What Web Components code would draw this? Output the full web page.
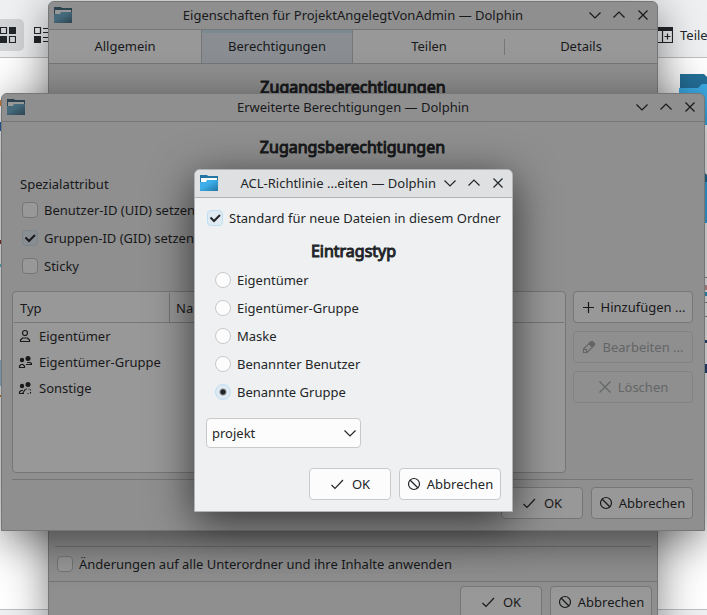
<!DOCTYPE html>
<html lang="de">
<head>
<meta charset="utf-8">
<title>Dolphin</title>
<style>
    html, body {
        margin: 0;
        height: 100%;
        overflow: hidden;
    }

    body {
        font: 13px/20px "Noto Sans", sans-serif;
        color: #232629;
        background: #fff;
    }

    .desk {
        position: relative;
        height: 100%;
    }

    file-manager {
        height: 100%;
    }

    .win {
        position: absolute;
    }

    #properties {
        left: 48px;
        right: 49px;
        top: 1px;
        bottom: -16px;
    }

    #advanced {
        left: 1px;
        right: 2px;
        top: 93px;
    }

    #acl {
        left: 194px;
        right: 194px;
        top: 169px;
    }

    .filler {
        flex: 1;
    }

    .pad {
        display: flex;
        flex-direction: column;
        padding: 10px 11px 11px 10px;
    }

    .attributes {
        display: flex;
        flex-direction: column;
        gap: 4px;
        padding: 12px 8px 13px;
    }

    .attributes b {
        font-weight: 400;
    }

    .indent {
        margin-left: 2px;
    }

    .columns {
        display: flex;
        gap: 7px;
    }

    entry-table {
        flex: 1;
    }

    .side {
        display: flex;
        flex-direction: column;
        gap: 8px;
        width: 120px;
    }

    .buttons {
        display: flex;
        justify-content: flex-end;
        gap: 8px;
    }

    .ok {
        width: 82px;
    }

    .cancel {
        width: 102px;
    }

    .rule {
        border-top: 1px solid var(--border);
    }

    #advanced .rule {
        margin: 6px 0 7px;
    }

    #properties .pad {
        padding: 8px 10px;
    }

    #properties .options {
        margin: 0 6px;
        padding: 5px 2px;
    }

    #properties .footer {
        border-top: 1px solid var(--border);
        padding: 4px 5px 12px;
    }

    #acl .pad {
        padding: 8px 11px 11px;
    }

    #acl check-box {
        padding-left: 1px;
    }

    #acl section-title {
        margin: 6px 0 2px;
    }

    #acl combo-box {
        margin: 14px 0 20px;
    }
</style>
</head>
<body>
<div class="desk">
    <file-manager></file-manager>

    <dialog-window id="properties" class="win" inactive heading="Eigenschaften für ProjektAngelegtVonAdmin — Dolphin">
        <tab-strip labels="Allgemein,Berechtigungen,Teilen,Details" active="1"></tab-strip>
        <div class="pad"><section-title>Zugangsberechtigungen</section-title></div>
        <div class="filler"></div>
        <div class="options rule">
            <check-box>Änderungen auf alle Unterordner und ihre Inhalte anwenden</check-box>
        </div>
        <div class="buttons footer">
            <push-button class="ok" icon="ok">OK</push-button>
            <push-button class="cancel" icon="cancel">Abbrechen</push-button>
        </div>
    </dialog-window>

    <dialog-window id="advanced" class="win" inactive heading="Erweiterte Berechtigungen — Dolphin">
        <div class="pad">
            <section-title>Zugangsberechtigungen</section-title>
            <div class="attributes">
                <b>Spezialattribut</b>
                <check-box class="indent">Benutzer-ID (UID) setzen</check-box>
                <check-box class="indent" checked>Gruppen-ID (GID) setzen</check-box>
                <check-box class="indent">Sticky</check-box>
            </div>
            <div class="columns">
                <entry-table></entry-table>
                <div class="side">
                    <push-button icon="add">Hinzufügen ...</push-button>
                    <push-button icon="edit" disabled>Bearbeiten ...</push-button>
                    <push-button icon="remove" disabled>Löschen</push-button>
                </div>
            </div>
            <div class="rule"></div>
            <div class="buttons">
                <push-button class="ok" icon="ok">OK</push-button>
                <push-button class="cancel" icon="cancel">Abbrechen</push-button>
            </div>
        </div>
    </dialog-window>

    <dialog-window id="acl" class="win" heading="ACL-Richtlinie ...eiten — Dolphin">
        <div class="pad">
            <check-box checked>Standard für neue Dateien in diesem Ordner</check-box>
            <section-title>Eintragstyp</section-title>
            <radio-list options="Eigentümer,Eigentümer-Gruppe,Maske,Benannter Benutzer,Benannte Gruppe" selected="4"></radio-list>
            <combo-box label="Gruppe" options="projekt"></combo-box>
            <div class="buttons">
                <push-button class="ok" icon="ok">OK</push-button>
                <push-button class="cancel" icon="cancel">Abbrechen</push-button>
            </div>
        </div>
    </dialog-window>
</div>

<script>
const ICONS = {
    folder: `<svg width="20" height="18" viewBox="0 0 20 18">
        <defs><linearGradient id="body" x1="0" y1="0" x2="1" y2="1">
            <stop offset=".4" style="stop-color: var(--folder)"/>
            <stop offset="1" style="stop-color: var(--folder-dark)"/>
        </linearGradient></defs>
        <path style="fill: var(--folder-dark)" d="M1 1h7l1 1h10v8H1z"/>
        <path style="fill: var(--folder-paper)" d="M2 4h16v4H2z"/>
        <path fill="url(#body)" d="M1 8h6l1-2h11v11H1z"/></svg>`,
    down: '<svg width="12" height="12" viewBox="0 0 12 12"><path d="M.5 3.500l5.500 5.500 5.500-5.500"/></svg>',
    up: '<svg width="12" height="12" viewBox="0 0 12 12"><path d="M.5 8.500L6 3l5.500 5.500"/></svg>',
    close: '<svg width="12" height="12" viewBox="0 0 12 12"><path d="M1.500 1.500l9 9M10.500 1.500l-9 9"/></svg>',
    ok: '<svg width="14" height="14" viewBox="0 0 14 14"><path d="M1.500 8l3.500 3.500L13 3"/></svg>',
    cancel: '<svg width="14" height="14" viewBox="0 0 14 14"><circle cx="7" cy="7" r="5.500"/><path d="M3 3l8 8"/></svg>',
    add: '<svg width="14" height="14" viewBox="0 0 14 14"><path d="M7.500 2v11M2 7.500h11"/></svg>',
    edit: `<svg width="14" height="14" viewBox="0 0 14 14">
        <path d="M1.500 12.500V9L7 3.500 10.500 7 5 12.500zM2 9.500h2.500V12"/>
        <path fill="currentColor" d="M7 3.500L9 1.500h1.500L12.500 3.500V5l-2 2z"/></svg>`,
    remove: '<svg width="14" height="14" viewBox="0 0 14 14"><path d="M1.500 1.500l11 11M12.500 1.500l-11 11"/></svg>',
    user: `<svg width="14" height="14" viewBox="0 0 14 14">
        <circle cx="7" cy="4" r="2.500"/><path d="M2.500 12.500v-1.500l2-2h5l2 2v1.500z"/></svg>`,
    group: `<svg width="14" height="14" viewBox="0 0 14 14">
        <g fill="currentColor" stroke="none"><circle cx="4" cy="5" r="2.200"/><circle cx="10" cy="3.500" r="2.500"/></g>
        <path d="M1.500 12.500V11l1.500-1.500h2L6.500 11v1.500zM8 9.500h5.500V8.500L12 7.500H9"/></svg>`,
    others: `<svg width="14" height="14" viewBox="0 0 14 14">
        <g fill="currentColor" stroke="none"><circle cx="4" cy="5" r="2.200"/><circle cx="10" cy="3.500" r="2.500"/></g>
        <path d="M1.500 12.500V11l1.500-1.500h2M1 12.500h5M7.500 8l-3 4.500"/>
        <path stroke-dasharray="1 1.500" d="M8 8h4.500v5M9.500 12.500h3"/></svg>`
};

const SHARED = `
    :host { display: block; }
    svg { flex: none; display: block; fill: none; stroke: currentColor; stroke-width: 1.2; }
    button, input, select { font: inherit; color: inherit; margin: 0; box-sizing: border-box; }
`;

class BaseElement extends HTMLElement {
    connectedCallback() {
        this.attachShadow({ mode: 'open' });
        this.shadowRoot.innerHTML = `<style>${SHARED}${this.styles()}</style>${this.markup()}`;
    }

    list(name) {
        return (this.getAttribute(name) || '').split(',');
    }
}

class DialogWindow extends BaseElement {
    styles() {
        return `
            :host {
                --window: #eff0f1;
                --titlebar: #dee0e2;
                --view: #fcfcfc;
                --border: #c8c9cb;
                --check: #e0eaf2;
                --check-border: #bcdff5;
                --folder: #3daee9;
                --folder-dark: #2475a4;
                --folder-paper: #fcfcfc;
                display: flex;
                flex-direction: column;
                box-sizing: border-box;
                color: #232629;
                background: var(--window);
                border: 1px solid #b2b3b5;
                border-radius: 6px 6px 0 0;
                box-shadow: 0 10px 44px rgba(0, 0, 0, 0.65);
            }
            :host([inactive]) {
                --window: #8f8f8f;
                --titlebar: #8f8f8f;
                --view: #989898;
                --border: #757677;
                --check: #898e92;
                --check-border: #7b858c;
                --folder: #456a7c;
                --folder-dark: #2c4350;
                --folder-paper: #989898;
                --tab-active: #8a8e92;
                --accent: #7b8991;
                color: #18191b;
                border-color: #757677;
                box-shadow: 0 10px 44px rgba(0, 0, 0, 0.5);
            }
            header {
                display: flex;
                align-items: center;
                box-sizing: border-box;
                height: 28px;
                padding: 0 8px 2px 4px;
                background: var(--titlebar);
                border-bottom: 1px solid #b2b3b5;
                border-radius: 5px 5px 0 0;
            }
            :host([inactive]) header { border-color: var(--border); }
            header > svg { stroke: none; }
            h1 {
                flex: 1;
                margin: 0;
                font: inherit;
                text-align: center;
                white-space: nowrap;
            }
            /* room on the left balances the three window controls */
            :host([inactive]) h1 { padding-left: 44px; }
            :host(:not([inactive])) h1 { text-align: right; padding-right: 8px; }
            nav { display: flex; gap: 12px; }
            nav button {
                display: flex;
                padding: 0;
                border: 0;
                background: none;
            }
        `;
    }

    markup() {
        return `
            <header>
                ${ICONS.folder}
                <h1>${this.getAttribute('heading')}</h1>
                <nav>
                    <button aria-label="Minimieren">${ICONS.down}</button>
                    <button aria-label="Maximieren">${ICONS.up}</button>
                    <button aria-label="Schließen">${ICONS.close}</button>
                </nav>
            </header>
            <slot></slot>
        `;
    }
}

class TabStrip extends BaseElement {
    styles() {
        return `
            :host { display: flex; height: 33px; background: var(--view); border-bottom: 1px solid var(--border); }
            button {
                flex: 1;
                padding: 0 0 2px;
                border: 0;
                background: none;
            }
            button.active {
                background: var(--tab-active);
                box-shadow: inset 1px 0 var(--border), inset -1px 0 var(--border), inset 0 3px var(--accent);
            }
            i { width: 1px; margin: 9px 0 8px -1px; background: var(--border); }
        `;
    }

    markup() {
        const active = Number(this.getAttribute('active'));
        return this.list('labels').map((label, i) => {
            const divider = i > active + 1 ? '<i></i>' : '';
            return `${divider}<button role="tab" class="${i === active ? 'active' : ''}">${label}</button>`;
        }).join('');
    }
}

class SectionTitle extends BaseElement {
    styles() {
        return `
            h2 {
                margin: 0;
                font-size: 16px;
                line-height: 30px;
                font-weight: 400;
                text-align: center;
                -webkit-text-stroke: 1px currentColor;
            }
        `;
    }

    markup() {
        return '<h2><slot></slot></h2>';
    }
}

class CheckBox extends BaseElement {
    styles() {
        return `
            label { display: flex; align-items: center; gap: 6px; height: 24px; white-space: nowrap; }
            input {
                appearance: none;
                flex: none;
                width: 16px;
                height: 16px;
                background: var(--view);
                border: 1px solid var(--border);
                border-radius: 4px;
            }
            input:checked { background: var(--check); border-color: var(--check-border); }
            span { display: grid; align-items: center; }
            span > * { grid-area: 1 / 1; }
            svg { display: none; stroke-width: 2; pointer-events: none; }
            input:checked + svg { display: block; }
        `;
    }

    markup() {
        return `
            <label>
                <span>
                    <input type="checkbox" ${this.hasAttribute('checked') ? 'checked' : ''}>
                    <svg width="16" height="16" viewBox="0 0 16 16"><path d="M3.500 7.500l3.500 3.500 6-6"/></svg>
                </span>
                <slot></slot>
            </label>
        `;
    }
}

class RadioList extends BaseElement {
    styles() {
        return `
            :host { display: flex; flex-direction: column; gap: 4px; padding-left: 9px; }
            label { display: flex; align-items: center; gap: 6px; height: 24px; }
            input {
                appearance: none;
                width: 16px;
                height: 16px;
                background: var(--view);
                border: 1px solid var(--border);
                border-radius: 50%;
            }
            input:checked {
                background: radial-gradient(circle, #232629 0 2px, var(--check) 4px);
                border-color: var(--check-border);
            }
        `;
    }

    markup() {
        const selected = Number(this.getAttribute('selected'));
        return this.list('options').map((label, i) => `
            <label><input type="radio" name="entry" ${i === selected ? 'checked' : ''}>${label}</label>
        `).join('');
    }
}

class ComboBox extends BaseElement {
    styles() {
        return `
            label { display: inline-grid; align-items: center; width: 155px; }
            label > * { grid-area: 1 / 1; }
            select {
                appearance: none;
                width: 100%;
                height: 30px;
                padding: 0 24px 0 5px;
                background: var(--view);
                border: 1px solid var(--border);
                border-radius: 4px;
            }
            svg { justify-self: end; margin-right: 5px; pointer-events: none; }
        `;
    }

    markup() {
        const options = this.list('options').map(o => `<option>${o}</option>`).join('');
        return `<label><select aria-label="${this.getAttribute('label')}">${options}</select>${ICONS.down}</label>`;
    }
}

class PushButton extends BaseElement {
    styles() {
        return `
            button {
                display: flex;
                align-items: center;
                justify-content: center;
                gap: 6px;
                width: 100%;
                height: 32px;
                padding: 0;
                background: var(--view);
                border: 1px solid var(--border);
                border-radius: 4px;
                white-space: nowrap;
            }
            :host([icon="ok"]) button { gap: 8px; }
            button:disabled { color: #646566; background: none; border-color: #828384; }
        `;
    }

    markup() {
        const disabled = this.hasAttribute('disabled') ? 'disabled' : '';
        return `<button ${disabled}>${ICONS[this.getAttribute('icon')]}<span><slot></slot></span></button>`;
    }
}

class EntryTable extends BaseElement {
    styles() {
        return `
            :host {
                box-sizing: border-box;
                height: 182px;
                padding: 1px;
                background: var(--view);
                border: 1px solid var(--border);
                border-radius: 4px;
            }
            table { width: 100%; border-collapse: separate; border-spacing: 0; }
            th {
                box-sizing: border-box;
                height: 30px;
                padding: 0 6px;
                font-weight: 400;
                text-align: left;
                border-bottom: 1px solid var(--border);
            }
            th:first-child { width: 156px; border-right: 1px solid var(--border); }
            td { height: 26px; padding: 0 4px; }
            td div { display: flex; align-items: center; gap: 7px; }
        `;
    }

    markup() {
        const rows = [['user', 'Eigentümer'], ['group', 'Eigentümer-Gruppe'], ['others', 'Sonstige']];
        return `
            <table>
                <thead><tr><th>Typ</th><th>Name</th></tr></thead>
                <tbody>
                    ${rows.map(([icon, name]) => `<tr><td><div>${ICONS[icon]}${name}</div></td><td></td></tr>`).join('')}
                </tbody>
            </table>
        `;
    }
}

class FileManager extends BaseElement {
    styles() {
        return `
            :host { display: flex; flex-direction: column; overflow: hidden; }
            .toolbar {
                display: flex;
                align-items: center;
                justify-content: space-between;
                height: 58px;
                padding-top: 12px;
                box-sizing: border-box;
                background: #eff0f1;
                border-bottom: 1px solid #bcbebf;
            }
            .views { display: flex; align-items: center; gap: 10px; }
            button {
                display: flex;
                align-items: center;
                gap: 7px;
                height: 32px;
                padding: 0;
                border: 0;
                background: none;
            }
            .current {
                width: 24px;
                background: #d3d4d6;
                border-radius: 0 5px 5px 0;
            }
            .share { width: 52px; }
            .files {
                flex: 1;
                display: flex;
                flex-direction: column;
                align-items: flex-end;
                gap: 45px;
                padding-top: 15px;
                /* previews that peek out at the left edge */
                background: linear-gradient(
                    transparent 42px, #d08030 42px 48px, transparent 48px 64px, #2a66b0 64px 73px,
                    transparent 73px 182px, #8a3a30 182px 186px, transparent 186px 206px, #60c0d8 206px 209px,
                    transparent 209px 302px, #9cc4dc 302px 328px, transparent 328px 337px, #d08030 337px 339px,
                    transparent 339px) 0 0 / 2px 100% no-repeat;
            }
            .files svg { stroke: none; }
            .preview path { stroke-width: 2; }
            footer { height: 5px; background: #eff0f1; border-top: 1px solid #bcbebf; }
        `;
    }

    markup() {
        const folder = `
            <svg width="28" height="53" viewBox="0 0 28 53">
                <path fill="#25709a" d="M1 1h24l3 3v20H1z"/>
                <path fill="#3daee9" d="M0 15h19l4-4h5v41H0z"/>
            </svg>`;
        return `
            <div class="toolbar">
                <div class="views">
                    <button class="current" aria-label="Symbole">
                        <svg width="16" height="16" viewBox="0 0 16 16">
                            <path fill="currentColor" stroke="none" d="M9 0h7v7H9zM0 9h7v7H0z"/>
                            <path d="M.5.5h6v6h-6zM9.500 9.500h6v6h-6z"/>
                        </svg>
                    </button>
                    <button aria-label="Kompakt">
                        <svg width="16" height="16" viewBox="0 0 16 16">
                            <path fill="currentColor" stroke="none" d="M0 9h7v7H0z"/>
                            <path d="M.5.5h6v6h-6zM9 1.500h7M9 5.500h7M9 10.500h7M9 14.500h7"/>
                        </svg>
                    </button>
                </div>
                <button class="share">
                    <svg width="18" height="16" viewBox="0 0 18 16">
                        <path fill="currentColor" stroke="none" d="M0 0h18v4H0z"/>
                        <path d="M0 15.500h17.500V3M7.500 3v12M12.500 6.500v6M9.500 9.500h6"/>
                    </svg>
                    Teilen
                </button>
            </div>
            <div class="files">
                ${folder}
                ${folder}
                <svg class="preview" width="2" height="110" viewBox="0 0 2 110">
                    <path fill="#c89a9c" d="M0 16h2v5H0z"/>
                    <path fill="#3a9fd0" d="M0 23h2v4H0z"/>
                    <path fill="#2a4a80" d="M0 71h2v3H0zM0 95h2v9H0z"/>
                    <path fill="#888" d="M0 8h2v1H0zM0 33h2v1H0zM0 47h2v1H0z"/>
                </svg>
            </div>
            <footer></footer>
        `;
    }
}

customElements.define('dialog-window', DialogWindow);
customElements.define('tab-strip', TabStrip);
customElements.define('section-title', SectionTitle);
customElements.define('check-box', CheckBox);
customElements.define('radio-list', RadioList);
customElements.define('combo-box', ComboBox);
customElements.define('push-button', PushButton);
customElements.define('entry-table', EntryTable);
customElements.define('file-manager', FileManager);
</script>
</body>
</html>
